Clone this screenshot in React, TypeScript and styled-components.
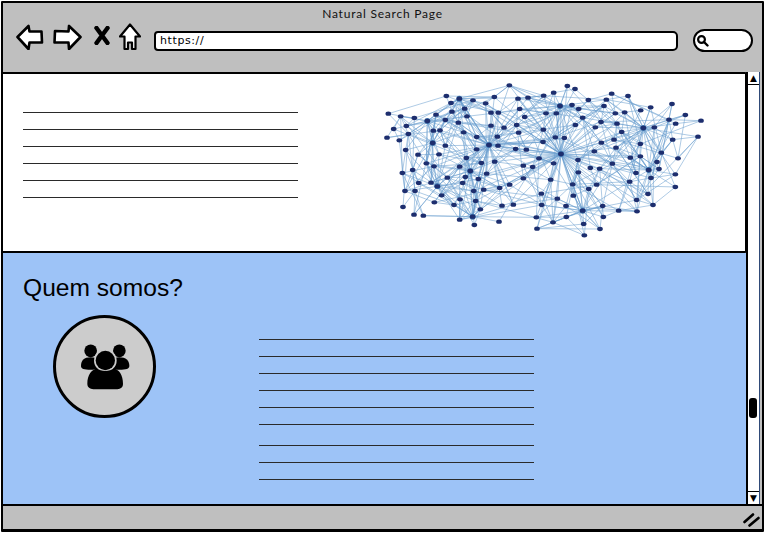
import styled, { createGlobalStyle } from "styled-components";

const GlobalStyle = createGlobalStyle`
  html, body {
    margin: 0;
    padding: 0;
    background: #fff;
  }
  * {
    box-sizing: border-box;
  }
`;

// graph nodes, read off the picture
const NODES = [
  [403,31],[577,33],[600,42],[536,53],[506,62],[214,63],[358,66],[253,71],[294,76],[429,71],[459,68],[710,56],[759,63],[694,74],[640,75],
  [228,84],[332,85],[555,93],[591,90],[687,93],[611,102],[827,97],[891,87],[797,106],[434,102],[269,101],[231,110],[348,113],[370,113],
  [513,115],[544,115],[721,115],[749,112],[40,116],[77,124],[118,129],[183,119],[276,124],[449,126],[623,128],[931,120],[978,137],[882,134],
  [902,146],[157,138],[211,135],[250,143],[348,152],[425,150],[601,150],[678,141],[726,146],[661,157],[805,159],[838,157],[94,153],[56,162],
  [175,167],[195,166],[387,158],[505,164],[266,172],[431,173],[100,177],[740,171],[36,188],[73,196],[305,186],[367,185],[541,187],[568,189],
  [717,194],[969,185],[893,194],[173,204],[211,212],[342,210],[369,212],[504,201],[679,203],[796,207],[305,223],[422,222],[454,224],[723,218],
  [92,225],[129,239],[192,238],[558,237],[658,229],[859,233],[274,249],[492,250],[766,248],[796,244],[909,250],[609,255],[154,265],[319,264],
  [359,260],[536,265],[846,261],[177,274],[254,275],[445,272],[473,276],[712,266],[646,279],[674,281],[852,282],[821,285],[113,285],[82,294],
  [286,288],[335,296],[610,292],[783,294],[901,298],[217,308],[271,306],[310,312],[445,310],[527,314],[828,309],[764,320],[131,324],[168,323],
  [263,324],[187,334],[404,329],[593,328],[665,329],[901,336],[374,339],[326,344],[296,348],[90,348],[120,348],[641,342],[200,361],[499,356],
  [595,362],[819,357],[255,373],[547,371],[785,375],[178,382],[302,378],[237,390],[381,392],[415,389],[500,390],[573,393],[683,393],[834,390],
  [84,396],[316,403],[623,407],[731,407],[786,409],[117,419],[145,422],[293,425],[484,427],[574,426],[685,426],[254,434],[372,440],[534,442],
  [626,447],[298,450],[486,461],[675,462],[628,481],
];

const HUBS = [
  [558,237,300],[342,210,230],[805,159,190],[821,285,170],[623,407,190],[187,334,150],[293,425,150],
  [253,71,170],[555,93,190],[157,138,130],[173,204,100],[286,288,160],
];

const buildEdges = () => {
  const edges: number[][] = [];
  NODES.forEach(([x, y], i) => {
    HUBS.forEach(([hx, hy, reach], h) => {
      const d = Math.hypot(hx - x, hy - y);
      if (d > 0 && d < reach && (i + h * 3) % 3 !== 2) edges.push([x, y, hx, hy]);
    });
    const near = NODES.map(([nx, ny]) => [nx, ny, Math.hypot(nx - x, ny - y)])
      .filter((n) => n[2] > 0)
      .sort((a, b) => a[2] - b[2]);
    const pick = near[2 + (i % 5)];
    edges.push([x, y, pick[0], pick[1]]);
    // a few long links so the edges spread over the whole cloud
    const far = near[8 + ((i * 7) % 28)];
    edges.push([x, y, far[0], far[1]]);
    const farther = near[20 + ((i * 11) % 30)];
    if (i % 2 === 0) edges.push([x, y, farther[0], farther[1]]);
  });
  return edges;
};

const EDGES = buildEdges();

const NetworkGraph = () => (
  <GraphSvg viewBox="0 0 1020 510">
    {EDGES.map(([x1, y1, x2, y2], i) => (
      <line key={i} x1={x1} y1={y1} x2={x2} y2={y2} stroke="#6a9fcf" strokeWidth="1.9" strokeOpacity="0.85" />
    ))}
    {HUBS.map(([x, y], i) => (
      <circle key={i} cx={x} cy={y} r="9" fill="#3f74ae" />
    ))}
    {NODES.map(([x, y], i) => (
      <ellipse key={i} cx={x} cy={y} rx="8.5" ry="6.5" fill="#1d2e6e" />
    ))}
  </GraphSvg>
);

const BackIcon = () => (
  <NavSvg $top={1} $gap={8} width="29" height="26" viewBox="0 0 29 26">
    <path d="M1.5 13 L12.5 2 L13.5 7.5 L25.5 7.5 L26 18.5 L13.5 18.5 L12.5 25 Z" fill="#fff" stroke="#000" strokeWidth="2.6" strokeLinejoin="round" />
  </NavSvg>
);

const ForwardIcon = () => (
  <NavSvg $top={1} $gap={12} width="29" height="26" viewBox="0 0 29 26">
    <path d="M27.5 13 L16 2 L15.5 7.5 L2 7 L1.5 18.5 L15.5 18.5 L16 25 Z" fill="#fff" stroke="#000" strokeWidth="2.6" strokeLinejoin="round" />
  </NavSvg>
);

const StopIcon = () => (
  <NavSvg $top={3} $gap={9} width="16" height="19" viewBox="0 0 16 19">
    <path d="M2.5 2 L13.5 17 M13.5 2 L2.5 17" fill="none" stroke="#000" strokeWidth="4.4" strokeLinecap="round" />
  </NavSvg>
);

const HomeIcon = () => (
  <NavSvg $top={0} $gap={8} width="22" height="28" viewBox="0 0 22 28">
    <path d="M11 1.5 L21 13.5 L16.5 13.5 L16.5 26 L13 26 L13 19.5 L9 19.5 L9 26 L5.5 26 L5.5 13.5 L1 13.5 Z" fill="#fff" stroke="#000" strokeWidth="2.2" strokeLinejoin="round" />
  </NavSvg>
);

const SearchIcon = () => (
  <svg width="13" height="13" viewBox="0 0 13 13">
    <circle cx="5.5" cy="5.5" r="3.4" fill="none" stroke="#000" strokeWidth="2.2" />
    <path d="M8 8 L11.5 11.5" stroke="#000" strokeWidth="2.4" strokeLinecap="round" />
  </svg>
);

const GroupIcon = () => (
  <svg width="50" height="47" viewBox="240 310 150 140">
    <circle cx="272" cy="333" r="19" fill="#000" />
    <circle cx="358" cy="333" r="19" fill="#000" />
    <path d="M243 378 C243 362 252 352 272 352 C292 352 300 362 300 378 C300 388 290 390 272 390 C252 390 243 388 243 378 Z" fill="#000" />
    <path d="M330 378 C330 362 338 352 358 352 C378 352 388 362 388 378 C388 388 378 390 358 390 C340 390 330 388 330 378 Z" fill="#000" />
    <circle cx="316" cy="362" r="34" fill="#ccc" />
    <circle cx="316" cy="362" r="29" fill="#000" />
    <path d="M262 432 C262 405 275 388 292 386 C300 396 332 396 340 386 C357 388 369 405 369 432 C369 443 362 448 352 448 L280 448 C270 448 262 443 262 432 Z" fill="#000" />
  </svg>
);

const GripIcon = () => (
  <svg width="17" height="14" viewBox="0 0 17 14">
    <path d="M1.5 9 L10 1.5 M6.5 12.5 L15.5 5" fill="none" stroke="#000" strokeWidth="2.6" strokeLinecap="round" />
  </svg>
);

const TextLines = ({ count }: { count: number }) => (
  <LineStack>
    {Array.from({ length: count }).map((_, i) => (
      <Rule key={i} />
    ))}
  </LineStack>
);

const App = () => (
  <>
    <GlobalStyle />
    <Page>
      <Browser>
        <Toolbar>
          <Title>Natural Search Page</Title>
          <NavRow>
            <BackIcon />
            <ForwardIcon />
            <StopIcon />
            <HomeIcon />
            <UrlBar>https://</UrlBar>
            <SearchBox>
              <SearchIcon />
            </SearchBox>
          </NavRow>
        </Toolbar>
        <Viewport>
          <Content>
            <Hero>
              <TextLines count={6} />
              <NetworkGraph />
            </Hero>
            <About>
              <Heading>Quem somos?</Heading>
              <AboutRow>
                <Avatar>
                  <GroupIcon />
                </Avatar>
                <AboutText>
                  <TextLines count={6} />
                  <TextLines count={3} />
                </AboutText>
              </AboutRow>
            </About>
          </Content>
          <Scrollbar>
            <ScrollButton>▲</ScrollButton>
            <ScrollTrack>
              <ScrollThumb />
            </ScrollTrack>
            <ScrollButton>▼</ScrollButton>
          </Scrollbar>
        </Viewport>
        <StatusBar>
          <GripIcon />
        </StatusBar>
      </Browser>
    </Page>
  </>
);

export default App;

const Page = styled.div`
  width: 765px;
  height: 537px;
  padding: 1px 1px 5px 1px;
  background: #fff;
  overflow: hidden;
`;

const Browser = styled.div`
  height: 100%;
  display: flex;
  flex-direction: column;
  background: #bfbfbf;
  border: 2px solid #000;
  border-bottom-width: 3px;
  border-radius: 1px;
`;

const Toolbar = styled.div`
  height: 69px;
  flex: none;
  display: flex;
  flex-direction: column;
  align-items: center;
  padding-top: 3px;
`;

const Title = styled.div`
  font-family: "Lato", "Liberation Sans", sans-serif;
  font-size: 12px;
  line-height: 16px;
  color: #111;
  letter-spacing: 0.78px;
`;

const NavRow = styled.div`
  align-self: stretch;
  display: flex;
  align-items: flex-start;
  margin-top: 1px;
  padding-left: 13px;
`;

const NavSvg = styled.svg<{ $top: number; $gap: number }>`
  flex: none;
  margin-top: ${(p) => p.$top}px;
  margin-right: ${(p) => p.$gap}px;
`;

const UrlBar = styled.div`
  width: 524px;
  height: 20px;
  margin-top: 8px;
  margin-left: 5px;
  padding-left: 4px;
  background: #fff;
  border: 2px solid #000;
  border-radius: 4px 5px 5px 4px;
  font-family: "DejaVu Sans", "Liberation Sans", sans-serif;
  font-size: 11px;
  line-height: 15px;
  letter-spacing: 0.6px;
  color: #000;
`;

const SearchBox = styled.div`
  width: 60px;
  height: 23px;
  margin-top: 6px;
  margin-left: 15px;
  padding-left: 1px;
  display: flex;
  align-items: center;
  background: #fff;
  border: 2px solid #000;
  border-radius: 12px;
`;

const Viewport = styled.div`
  flex: 1;
  display: flex;
  margin-right: 2px;
  min-height: 0;
`;

const Content = styled.div`
  width: 744px;
  display: flex;
  flex-direction: column;
`;

const Hero = styled.div`
  height: 181px;
  flex: none;
  display: flex;
  align-items: flex-start;
  justify-content: space-between;
  margin-left: -2px;
  margin-right: -1px;
  padding: 38px 30px 0 20px;
  background: #fff;
  border: 2px solid #000;
  border-radius: 2px;
`;

const GraphSvg = styled.svg`
  width: 340px;
  height: 170px;
  margin-top: -37px;
  flex: none;
`;

const LineStack = styled.div`
  width: 275px;
  display: flex;
  flex-direction: column;
  gap: 16px;
`;

const Rule = styled.div`
  height: 1px;
  background: #2a2a2a;
`;

const About = styled.div`
  flex: 1;
  background: #9dc3f7;
  padding: 19px 0 0 20px;
`;

const Heading = styled.h2`
  margin: 0;
  font-family: "Liberation Sans", sans-serif;
  font-size: 24.6px;
  font-weight: 400;
  line-height: 32px;
  color: #000;
`;

const AboutRow = styled.div`
  display: flex;
  align-items: flex-start;
  margin-top: 11px;
  padding-left: 30px;
`;

const Avatar = styled.div`
  width: 103px;
  height: 103px;
  flex: none;
  display: flex;
  align-items: center;
  justify-content: center;
  background: #ccc;
  border: 3px solid #000;
  border-radius: 50%;
`;

const AboutText = styled.div`
  display: flex;
  flex-direction: column;
  gap: 20px;
  margin-left: 103px;
  margin-top: 24px;
`;

const Scrollbar = styled.div`
  width: 14px;
  flex: none;
  display: flex;
  flex-direction: column;
  background: #fff;
  border-left: 2px solid #000;
  border-right: 1px solid #2f4a78;
`;

const ScrollButton = styled.div`
  height: 13px;
  flex: none;
  display: flex;
  align-items: center;
  justify-content: center;
  font-family: "DejaVu Sans", sans-serif;
  font-size: 9px;
  line-height: 1;
  color: #000;
  border-bottom: 1px solid #000;
  &:last-child {
    border-top: 1px solid #000;
    border-bottom: none;
  }
`;

const ScrollTrack = styled.div`
  flex: 1;
  padding: 313px 0 0 1px;
`;

const ScrollThumb = styled.div`
  width: 8px;
  height: 20px;
  background: #000;
  border-radius: 3px;
`;

const StatusBar = styled.div`
  height: 25px;
  flex: none;
  display: flex;
  align-items: center;
  justify-content: flex-end;
  padding: 4px 2px 0 0;
  border-top: 2px solid #000;
`;
